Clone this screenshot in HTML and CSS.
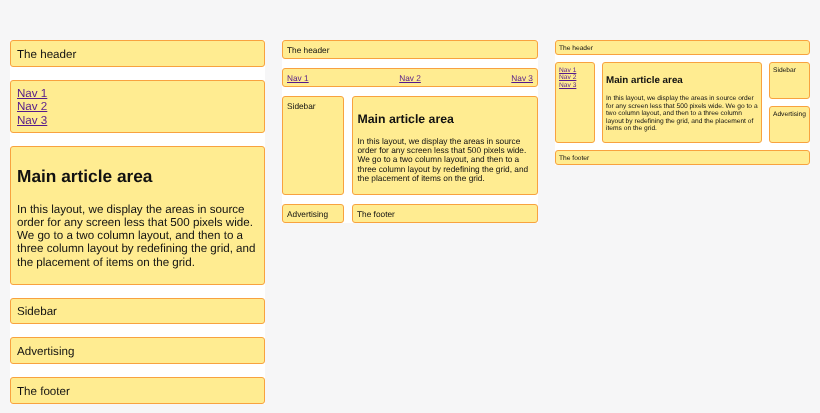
FILE: index.html
```html
<!DOCTYPE html>
<html lang="en">
<head>
<meta charset="utf-8">
<title>Grid layouts</title>
<link rel="stylesheet" href="styles.css">
</head>
<body>
<div class="stage">
  <div class="demo small">
    <div class="box">The header</div>
    <div class="box nav"><a href="#">Nav 1</a><a href="#">Nav 2</a><a href="#">Nav 3</a></div>
    <div class="box main"><h1>Main article area</h1><p>In this layout, we display the areas in source order for any screen less that 500 pixels wide. We go to a two column layout, and then to a three column layout by redefining the grid, and the placement of items on the grid.</p></div>
    <div class="box">Sidebar</div>
    <div class="box">Advertising</div>
    <div class="box">The footer</div>
  </div>
  <div class="demo medium">
    <div class="box header">The header</div>
    <div class="box nav"><a href="#">Nav 1</a><a href="#">Nav 2</a><a href="#">Nav 3</a></div>
    <div class="box side">Sidebar</div>
    <div class="box main"><h1>Main article area</h1><p>In this layout, we display the areas in source order for any screen less that 500 pixels wide. We go to a two column layout, and then to a three column layout by redefining the grid, and the placement of items on the grid.</p></div>
    <div class="box ad">Advertising</div>
    <div class="box footer">The footer</div>
  </div>
  <div class="demo large">
    <div class="box header">The header</div>
    <div class="box nav"><a href="#">Nav 1</a><a href="#">Nav 2</a><a href="#">Nav 3</a></div>
    <div class="box main"><h1>Main article area</h1><p>In this layout, we display the areas in source order for any screen less that 500 pixels wide. We go to a two column layout, and then to a three column layout by redefining the grid, and the placement of items on the grid.</p></div>
    <div class="box side">Sidebar</div>
    <div class="box ad">Advertising</div>
    <div class="box footer">The footer</div>
  </div>
</div>
</body>
</html>
```
FILE: styles.css
```css
html, body { margin: 0; height: 413px; overflow: hidden; background: #f6f6f7; }
body { font-family: "Liberation Sans", Arial, sans-serif; color: #111; text-rendering: geometricPrecision; }
.stage { display: flex; align-items: flex-start; gap: 17px; padding: 40px 10px 0; filter: blur(0.35px); }
.demo { display: grid; background: #fff; flex: 0 0 auto; }
.box { background: #ffec91; border: 1.5px solid #f8a23f; border-radius: 3px; box-sizing: border-box; }
.nav a { color: #551a8b; }
h1, p { margin: 0; }

.small { width: 255px; row-gap: 13px; font-size: 11.6px; line-height: 13.2px; }
.small .box { padding: 6.5px 6px 5px; height: 26.7px; }
.small .nav { height: 53px; display: flex; flex-direction: column; }
.small .main { height: 139px; padding-top: 19px; }
.small h1 { font-size: 17.3px; line-height: 20px; margin-bottom: 17px; }

.medium { width: 256px; font-size: 8.3px; line-height: 9.4px; grid-template-columns: 62px 186px; column-gap: 8px; row-gap: 9px; grid-template-rows: 19px 19px 99px 19px; }
.medium .box { padding: 4.5px 4px 3px; }
.medium .header, .medium .nav { grid-column: 1 / 3; }
.medium .nav { display: flex; justify-content: space-between; }
.medium .main { padding: 14.5px 4.5px 0; }
.medium h1 { font-size: 12.3px; line-height: 14px; margin-bottom: 11px; }

.large { width: 255px; font-size: 6.65px; line-height: 7.6px; grid-template-columns: 40px 160px 41px; column-gap: 7px; row-gap: 7px; grid-template-rows: 15px 37px 37px 15px; }
.large .box { padding: 3.8px 3px 2px; }
.large .header, .large .footer { grid-column: 1 / 4; }
.large .nav { grid-column: 1; grid-row: 2 / 4; display: flex; flex-direction: column; }
.large .main { grid-column: 2; grid-row: 2 / 4; padding-top: 12px; }
.large .side { grid-column: 3; grid-row: 2; }
.large .ad { grid-column: 3; grid-row: 3; }
.large h1 { font-size: 9.8px; line-height: 12px; margin-bottom: 8px; }
```
